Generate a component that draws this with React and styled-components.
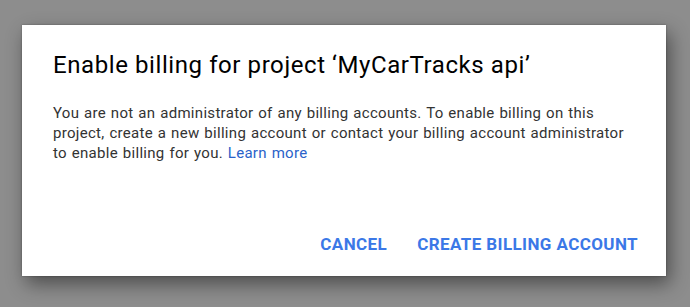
import React from "react"
import styled, { createGlobalStyle } from "styled-components"

const GlobalStyle = createGlobalStyle`
  html, body {
    margin: 0;
    padding: 0;
    background: #8c8c8c;
  }
  body {
    font-family: Roboto, "Liberation Sans", Arial, sans-serif;
  }
`

const Backdrop = styled.div`
  width: 690px;
  height: 307px;
  padding: 25px 0 0 22px;
  box-sizing: border-box;
  background: #8d8d8d;
`

const Dialog = styled.div`
  width: 644px;
  height: 251px;
  box-sizing: border-box;
  background: #ffffff;
  box-shadow: 4px 8px 18px rgba(0, 0, 0, 0.45), 0 0 2px rgba(0, 0, 0, 0.3);
  padding: 24px 20px 0 31px;
  display: flex;
  flex-direction: column;
`

const Title = styled.h2`
  margin: 0;
  font-size: 24px;
  letter-spacing: 0.58px;
  line-height: 32px;
  font-weight: 400;
  color: #000000;
  white-space: nowrap;
`

const Body = styled.p`
  margin: 22px 0 0;
  font-size: 15px;
  letter-spacing: 0.3px;
  word-spacing: 0.8px;
  line-height: 20px;
  color: #333333;

  a {
    color: #2a62c9;
    text-decoration: none;
  }
`

const Actions = styled.div`
  margin-top: auto;
  margin-bottom: 22px;
  margin-right: 8px;
  display: flex;
  justify-content: flex-end;
  gap: 30px;
`

const ActionButton = styled.button`
  border: none;
  background: none;
  padding: 0;
  font-family: inherit;
  font-size: 17px;
  font-weight: 700;
  letter-spacing: 0.4px;
  line-height: 20px;
  color: #3b78e7;
  text-transform: uppercase;
  cursor: pointer;
`

export default function App() {
  return (
    <>
      <GlobalStyle />
      <Backdrop>
        <Dialog>
          <Title>Enable billing for project ‘MyCarTracks api’</Title>
          <Body>
            You are not an administrator of any billing accounts. To enable billing on this
            <br />
            project, create a new billing account or contact your billing account administrator
            <br />
            to enable billing for you. <a href="#">Learn more</a>
          </Body>
          <Actions>
            <ActionButton>Cancel</ActionButton>
            <ActionButton>Create billing account</ActionButton>
          </Actions>
        </Dialog>
      </Backdrop>
    </>
  )
}
